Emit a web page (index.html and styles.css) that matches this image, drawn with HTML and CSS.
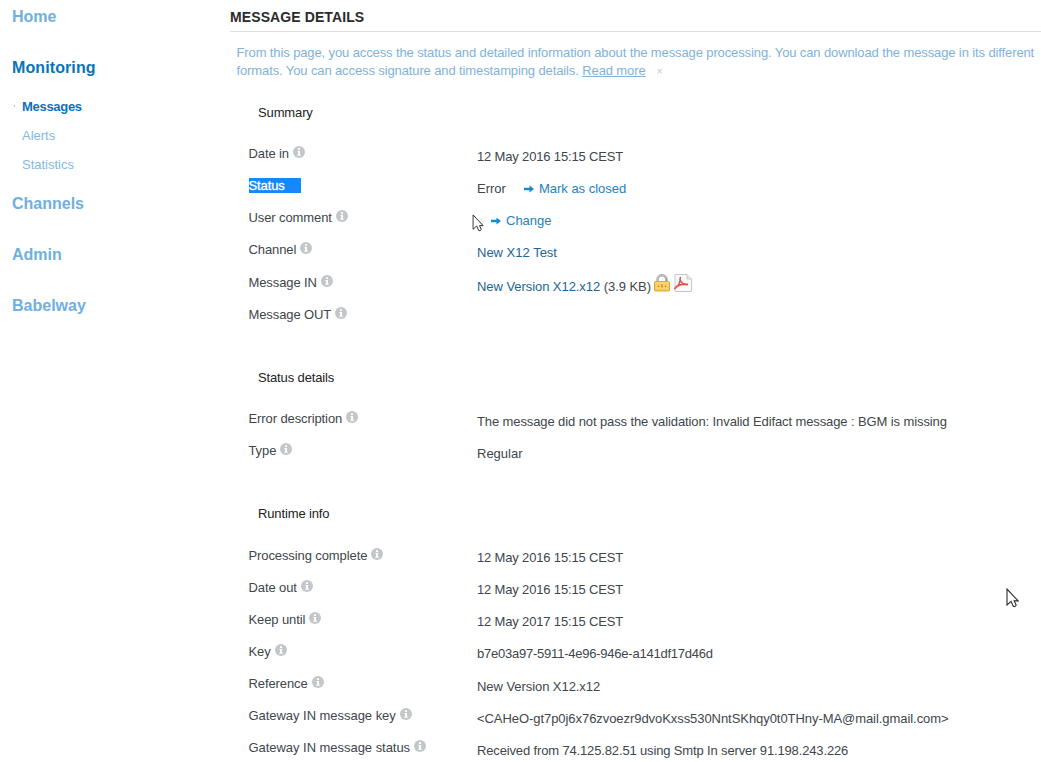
FILE: index.html
```html
<!DOCTYPE html>
<html lang="en">
<head>
<meta charset="utf-8">
<title>Message details</title>
<link rel="stylesheet" href="styles.css">
</head>
<body>
<svg class="sprite" aria-hidden="true">
  <symbol id="info" viewBox="0 0 12 12"><circle cx="6" cy="6" r="6" fill="#c3c7ca"/><path d="M5 2.2h2v1.7H5zM4.400 5H7v3.700h.8v1H4.300v-1h.8V6h-.7z" fill="#fff"/></symbol>
  <symbol id="arrow" viewBox="0 0 10 8"><path d="M0 2.800h5.500V.4L10 4 5.500 7.600V5.200H0z" fill="#128bd0"/></symbol>
  <symbol id="cursor" viewBox="0 0 13 20"><path d="M1 1v16l4-3.700 2.300 5q1.600 1 2.900-1l-2-4.400h4z" fill="#fff" stroke="#292933" stroke-width="1.100"/></symbol>
</svg>
<div class="page">
  <nav class="sidebar">
    <a class="section">Home</a>
    <a class="section current">Monitoring</a>
    <div class="submenu">
      <a class="current">Messages</a>
      <a>Alerts</a>
      <a>Statistics</a>
    </div>
    <a class="section">Channels</a>
    <a class="section">Admin</a>
    <a class="section">Babelway</a>
  </nav>
  <main>
    <h1>MESSAGE DETAILS</h1>
    <p class="intro">From this page, you access the status and detailed information about the message processing. You can download the message in its different<br>formats. You can access signature and timestamping details. <a>Read more</a><span class="close">×</span></p>
    <section>
      <h2>Summary</h2>
      <dl>
        <dt>Date in<svg class="info"><use href="#info"/></svg></dt><dd class="date">12 May 2016 15:15 CEST</dd>
        <dt><span class="selected">Status</span></dt><dd>Error<svg class="arrow gap"><use href="#arrow"/></svg><a class="action">Mark as closed</a></dd>
        <dt>User comment<svg class="info"><use href="#info"/></svg></dt><dd><svg class="arrow indent"><use href="#arrow"/></svg><a class="action">Change</a></dd>
        <dt>Channel<svg class="info"><use href="#info"/></svg></dt><dd><a>New X12 Test</a></dd>
        <dt>Message IN<svg class="info"><use href="#info"/></svg></dt><dd class="file"><a>New Version X12.x12</a>&nbsp;<span>(3.9 KB)</span>
          <svg class="lock" viewBox="0 0 16 18"><path d="M3.500 9V5.500a4.500 4.200 0 0 1 9 0V9" fill="none" stroke="#a5a39a" stroke-width="2.400"/><path d="M3.200 7V5a4.800 4.200 0 0 1 9.300-.8" fill="none" stroke="#d4d3cb" stroke-width=".8"/><rect x=".5" y="7.500" width="15" height="9.500" rx="1" fill="#f7c957" stroke="#dfa536"/><path d="M1.500 9h13M1.500 11.500h13M1.500 14h13" stroke="#ffe18a"/><path d="M8 10.500v3M4.500 11.500v1.500M11.500 11.500v1.500" stroke="#b47a26" stroke-width="1.200"/></svg>
          <svg class="pdf" viewBox="0 0 18 18"><path d="M1 .5h12l4.500 4.500v12.500H1z" fill="#fafafb" stroke="#c3c7d0"/><path d="M13 .5V5h4.500" fill="#e6e8ed" stroke="#c3c7d0"/><path d="M.8 14.500C4 12.500 6.300 8 6.300 3.500M6 5.500c.8 2.800 3 5.200 7.500 5.200M2.500 12.500C5 11 8 10 13.500 10.300" fill="none" stroke="#df5146" stroke-width="1.500" stroke-linecap="round"/></svg></dd>
        <dt>Message OUT<svg class="info"><use href="#info"/></svg></dt><dd></dd>
      </dl>
    </section>
    <section>
      <h2>Status details</h2>
      <dl>
        <dt>Error description<svg class="info"><use href="#info"/></svg></dt><dd class="error">The message did not pass the validation: Invalid Edifact message : BGM is missing</dd>
        <dt>Type<svg class="info"><use href="#info"/></svg></dt><dd>Regular</dd>
      </dl>
    </section>
    <section class="runtime">
      <h2>Runtime info</h2>
      <dl>
        <dt>Processing complete<svg class="info"><use href="#info"/></svg></dt><dd class="date">12 May 2016 15:15 CEST</dd>
        <dt>Date out<svg class="info"><use href="#info"/></svg></dt><dd class="date">12 May 2016 15:15 CEST</dd>
        <dt>Keep until<svg class="info"><use href="#info"/></svg></dt><dd class="date">12 May 2017 15:15 CEST</dd>
        <dt>Key<svg class="info"><use href="#info"/></svg></dt><dd class="key">b7e03a97-5911-4e96-946e-a141df17d46d</dd>
        <dt>Reference<svg class="info"><use href="#info"/></svg></dt><dd class="reference">New Version X12.x12</dd>
        <dt class="gateway">Gateway IN message key<svg class="info"><use href="#info"/></svg></dt><dd class="mail">&lt;CAHeO-gt7p0j6x76zvoezr9dvoKxss530NntSKhqy0t0THny-MA@mail.gmail.com&gt;</dd>
        <dt class="gateway">Gateway IN message status<svg class="info"><use href="#info"/></svg></dt><dd class="received">Received from 74.125.82.51 using Smtp In server 91.198.243.226</dd>
      </dl>
    </section>
  </main>
  <svg class="cursor first" viewBox="0 0 13 20"><use href="#cursor"/></svg>
  <svg class="cursor second"><use href="#cursor"/></svg>
</div>
</body>
</html>
```
FILE: styles.css
```css
* { box-sizing: border-box; }
body { margin: 0; background: #fff; color: #40464b; font: 13px/18px "Liberation Sans", Arial, sans-serif; }
.sprite { display: none; }
.page { position: relative; display: flex; width: 1041px; height: 762px; overflow: hidden; }
.sidebar { flex: none; width: 205px; margin-left: 12px; padding-top: 6px; color: #6eb0e0; }
.sidebar a { display: block; }
.section { height: 22px; margin: 0 0 29px; font-size: 16px; line-height: 22px; font-weight: bold; }
.sidebar .current { color: #0873bb; }
.sidebar .section.current { letter-spacing: .1px; }
.submenu { margin: -11px 0 11px; padding-left: 10px; }
.submenu a { position: relative; height: 28.400px; line-height: 21px; color: #83b9e2; }
.submenu .current { font-weight: bold; letter-spacing: -.3px; line-height: 20px; color: #0873bb; }
.submenu .current::before { content: ""; position: absolute; left: -8px; top: 8px; width: 1px; height: 2px; background: #b4bbc2; }
main { flex: 1; padding-left: 13px; white-space: nowrap; }
h1 { margin: 0; height: 32px; padding-top: 7px; border-bottom: 1px solid #dedede; color: #2b2b2b; font-size: 14px; line-height: 20px; letter-spacing: .1px; }
.intro { margin: 12px 0 0 6.500px; height: 52px; color: #7fb2db; letter-spacing: -.115px; }
.intro a { text-decoration: underline; }
.close { margin-left: 11px; font-size: 10px; color: #b9c9d5; }
section { height: 265px; }
section + section { height: 135.500px; }
h2 { margin: 0; padding: 8px 0 0 28px; height: 41px; color: #222; font-size: 13px; line-height: 18px; font-weight: normal; letter-spacing: -.13px; }
.runtime h2 { height: 42px; }
dl { display: grid; grid-template-columns: 228.500px 1fr; grid-auto-rows: 32.150px; margin: 0 0 0 18.500px; }
dt { padding-top: 8px; letter-spacing: -.1px; }
.gateway { letter-spacing: -.04px; }
dd { margin: 0; padding-top: 10.500px; }
dd a { color: #1c6494; }
dd .action { color: #2580c0; }
.date { letter-spacing: -.16px; }
.error { letter-spacing: -.105px; }
.key { letter-spacing: -.23px; }
.reference, .file { letter-spacing: -.06px; }
.mail { letter-spacing: -.06px; }
.received { letter-spacing: -.145px; }
.info { width: 12px; height: 12px; margin-left: 4px; vertical-align: -1px; position: relative; top: -1px; }
.selected { display: inline-block; width: 52px; height: 15px; line-height: 15px; background: #1688fc; color: #fff; -webkit-text-stroke: .3px #fff; vertical-align: top; margin-top: 1px; }
.arrow { width: 10px; height: 8px; margin-right: 5px; }
.gap { margin-left: 18px; }
.indent { margin-left: 14px; }
.file { display: flex; align-items: flex-start; padding-top: 12px; }
.lock { width: 16px; height: 18px; margin: -4px 0 0 3px; }
.pdf { width: 18px; height: 18px; margin: -4px 0 0 4px; }
.cursor { position: absolute; width: 13px; height: 20px; }
.first { left: 472px; top: 214px; width: 12px; height: 18px; }
.second { left: 1006px; top: 588px; }
```
